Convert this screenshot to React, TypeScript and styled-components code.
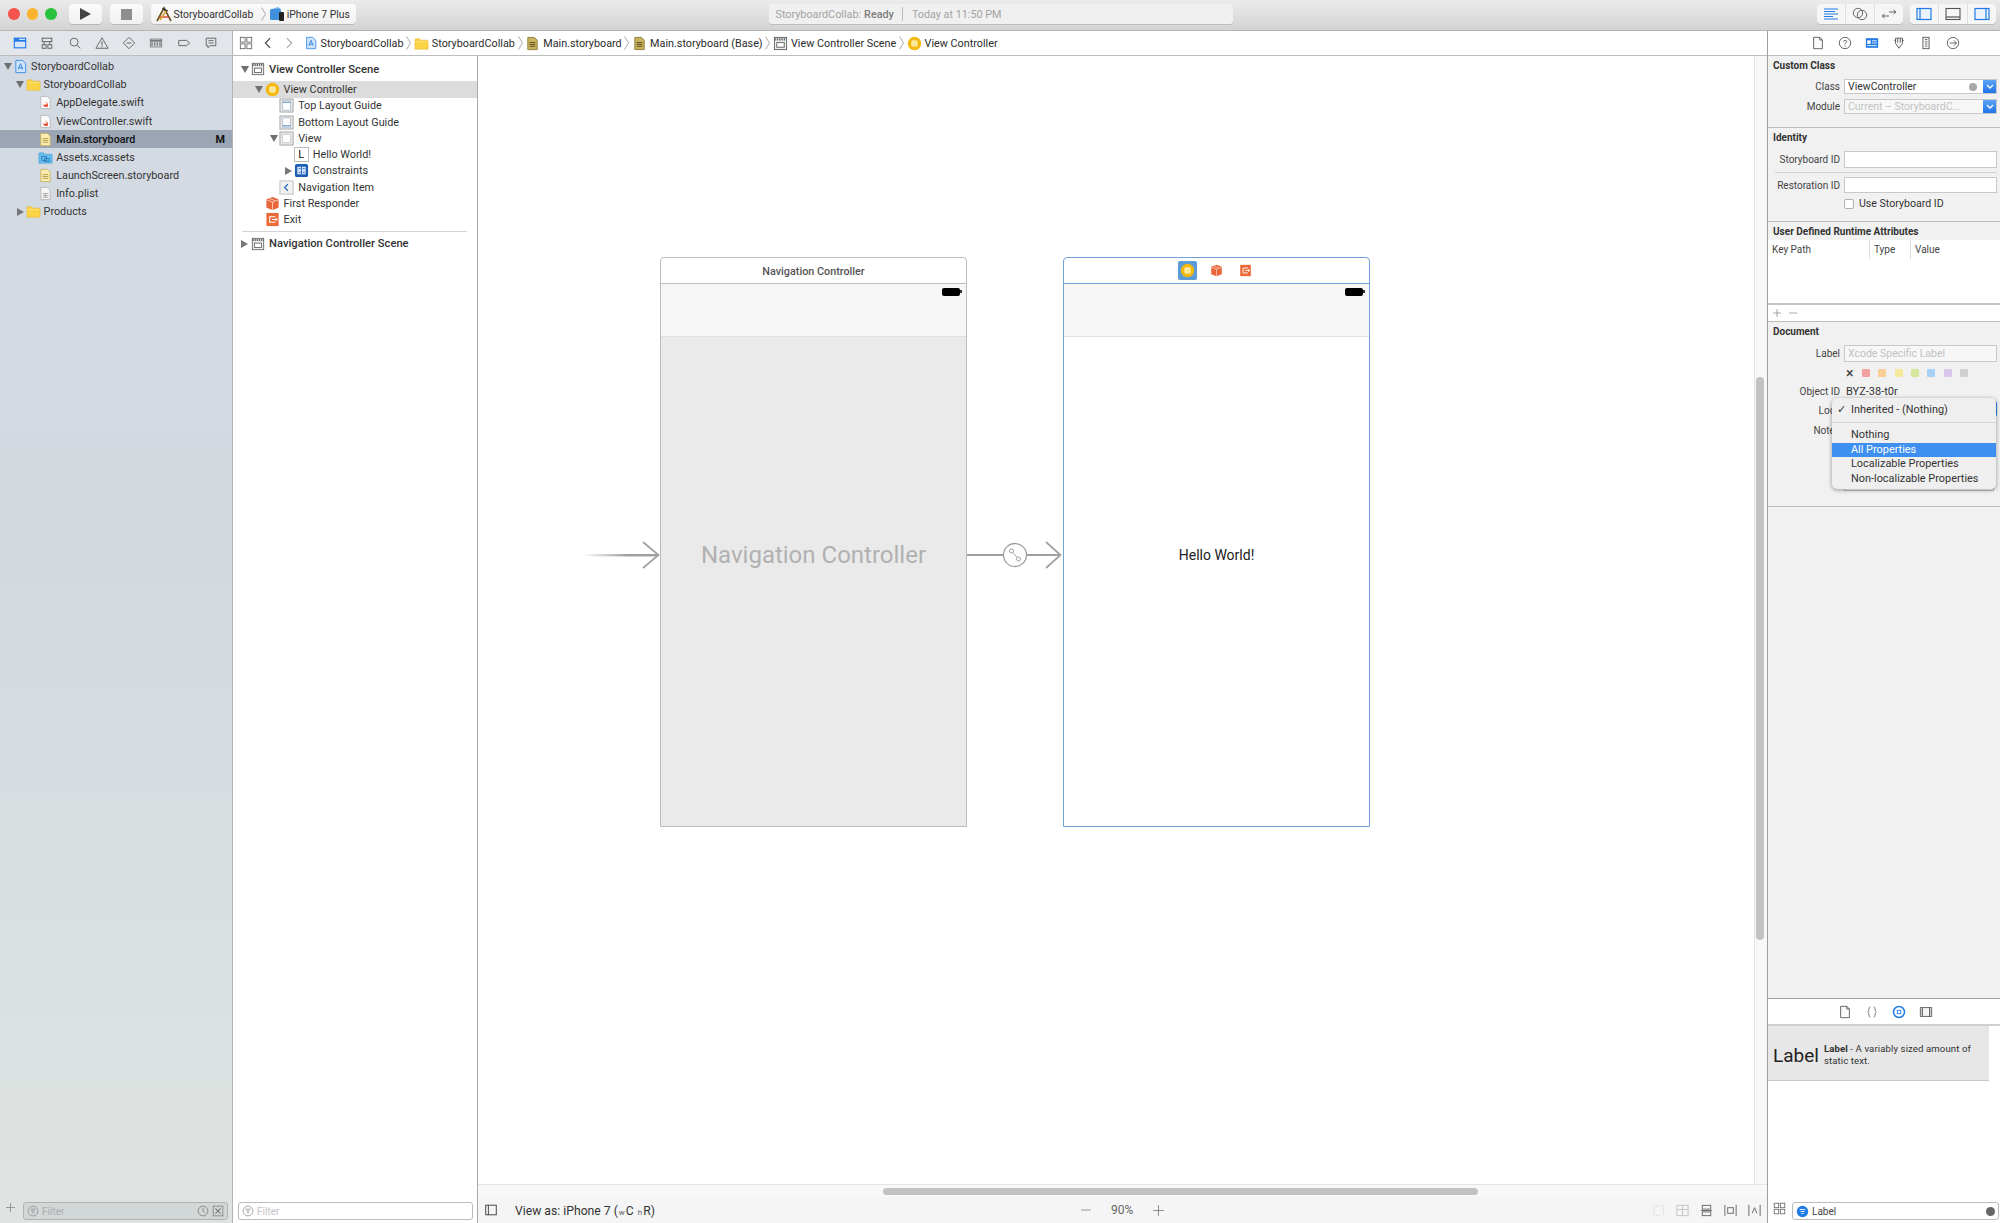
import React from "react";
import styled, { createGlobalStyle } from "styled-components";

const GlobalStyle = createGlobalStyle`
  html, body {
    margin: 0;
    padding: 0;
    background: #fff;
    font-family: Roboto, "Liberation Sans", sans-serif;
    font-size: 11px;
    color: #2b2b2b;
  }
  * { box-sizing: border-box; }
  svg { display: block; flex: none; }
`;

const Window = styled.div`
  width: 2000px;
  height: 1223px;
  display: flex;
  flex-direction: column;
  overflow: hidden;
`;

/* ---------- icons ---------- */

const glyphs: Record<string, React.ReactNode> = {
  hammer: (
    <>
      <path d="M1 15 8 2l7 13" fill="none" stroke="#6d4f1c" strokeWidth="1.6" />
      <path d="M3.5 11h9" stroke="#d8402e" strokeWidth="1.4" />
      <path d="M7 1.5l5 3-1 1.5-5-3z" fill="#333" />
      <path d="M10 5 4 14" stroke="#e0a030" strokeWidth="1.6" />
    </>
  ),
  phone: (
    <>
      <rect x="1" y="3" width="11" height="11" rx="1.5" fill="#3f8fdc" />
      <path d="M3 3l6-2 3 2z" fill="#6db2ec" />
      <rect x="10" y="6" width="5" height="9" rx="1" fill="#222" />
    </>
  ),
  navFolder: (
    <>
      <rect x="1.5" y="2.5" width="13" height="11" fill="#d8e8fb" stroke="#1f7ae6" strokeWidth="1.3" />
      <path d="M1.5 5.5h13" stroke="#1f7ae6" strokeWidth="2" />
      <path d="M2 2.5h5v2H2z" fill="#1f7ae6" />
    </>
  ),
  navTree: (
    <g fill="none" stroke="#555" strokeWidth="1">
      <rect x="2.5" y="2.5" width="11" height="4" />
      <rect x="2.5" y="10" width="4.5" height="4" />
      <rect x="9" y="10" width="4.5" height="4" />
      <path d="M4.7 6.5V10M11.2 6.5V10" />
    </g>
  ),
  navSearch: (
    <g fill="none" stroke="#666" strokeWidth="1.1">
      <circle cx="7" cy="7" r="4.5" />
      <path d="M10.3 10.3 14 14" />
    </g>
  ),
  navWarn: (
    <>
      <path d="M8 2 15 14H1z" fill="none" stroke="#666" strokeWidth="1.1" />
      <path d="M8 6v4.5M8 11.5v1.2" stroke="#666" strokeWidth="1.2" />
    </>
  ),
  navTest: (
    <>
      <path d="M8 1.5 14.5 8 8 14.5 1.5 8z" fill="none" stroke="#666" strokeWidth="1.1" />
      <path d="M5.5 8h5" stroke="#666" strokeWidth="1.2" />
    </>
  ),
  navDebug: (
    <>
      <rect x="1.5" y="3.5" width="13" height="9" fill="none" stroke="#777" />
      <path d="M1.5 5.5h13" stroke="#777" strokeWidth="2" />
      <path d="M3.5 7v4M6.5 7v4M9.5 7v4M12.5 7v4" stroke="#777" strokeWidth="1.6" />
    </>
  ),
  navBreak: <path d="M2 5h9l3.5 3L11 11H2z" fill="none" stroke="#666" strokeWidth="1.1" />,
  navReport: (
    <>
      <path d="M2.5 2.5h11v8.5H7l-2.5 2.5V11h-2z" fill="none" stroke="#666" strokeWidth="1.1" />
      <path d="M5 5.3h6M5 8h6" stroke="#666" />
    </>
  ),
  grid: (
    <g fill="none" stroke="#666">
      <rect x="1.5" y="1.5" width="5.5" height="5.5" />
      <rect x="9" y="1.5" width="5.5" height="5.5" />
      <rect x="1.5" y="9" width="5.5" height="5.5" />
      <rect x="9" y="9" width="5.5" height="5.5" />
    </g>
  ),
  back: <path d="M10.5 2.5 5 8l5.5 5.5" fill="none" stroke="#444" strokeWidth="1.3" />,
  forward: <path d="M5.5 2.5 11 8l-5.5 5.5" fill="none" stroke="#aaa" strokeWidth="1.3" />,
  project: (
    <>
      <path d="M3 1.5h7L13.5 5v9.5H3z" fill="#cfe4fa" stroke="#3a8ee6" />
      <path d="M5.5 11 8 5l2.5 6M6 9.5h4" fill="none" stroke="#2b7fdc" />
    </>
  ),
  folder: (
    <>
      <path d="M1 4a1 1 0 0 1 1-1h4l1.5 1.5H14a1 1 0 0 1 1 1V14H1z" fill="#fbd446" stroke="#e5b52c" strokeWidth=".6" />
      <path d="M1 6h14" stroke="#fde68a" strokeWidth=".7" />
    </>
  ),
  swift: (
    <>
      <path d="M3 1.5h7L13 4.5v10H3z" fill="#fbfbfb" stroke="#b9b9b9" />
      <path d="M5 10c2 1 4 .5 4.5-1L7 7l3 1.5c.7 1.3.6 3 .4 4-1.5.4-3.8.4-5.4-2.5z" fill="#e8442e" />
    </>
  ),
  storyboard: (
    <>
      <path d="M3 1.5h7L13 4.5v10H3z" fill="#fbeeb4" stroke="#cdb565" />
      <path d="M5 7h6M5 9h6M5 11h6" stroke="#b69a45" />
    </>
  ),
  storyboardDark: (
    <>
      <path d="M3 1.5h7L13 4.5v10H3z" fill="#c9b35f" stroke="#8f7c38" />
      <path d="M5 7h6M5 9h6M5 11h6" stroke="#5a4d20" />
    </>
  ),
  assets: (
    <>
      <path d="M1 4a1 1 0 0 1 1-1h4l1.5 1.5H14a1 1 0 0 1 1 1V14H1z" fill="#67bdee" stroke="#3f9ad6" strokeWidth=".6" />
      <rect x="4" y="7" width="5" height="4" fill="none" stroke="#1f74b5" strokeWidth=".8" />
      <rect x="7" y="9" width="5" height="3" fill="none" stroke="#1f74b5" strokeWidth=".8" />
    </>
  ),
  plist: (
    <>
      <path d="M3 1.5h7L13 4.5v10H3z" fill="#f5f5f5" stroke="#b9b9b9" />
      <path d="M5 8h6M5 10h6M5 12h6M8 8v4" stroke="#aaa" />
    </>
  ),
  scene: (
    <>
      <rect x="1.5" y="1.5" width="13" height="13" fill="#eee" stroke="#666" />
      <path d="M1.5 3.5h13" stroke="#666" strokeWidth="2.4" strokeDasharray="1.5 1" />
      <rect x="4" y="7" width="8" height="5" fill="#fff" stroke="#666" />
    </>
  ),
  vc: (
    <>
      <circle cx="8" cy="8" r="7.2" fill="#f5b80f" />
      <rect x="5" y="5" width="6" height="6" rx="1" fill="#fde89a" stroke="#fff3c4" strokeWidth=".6" />
    </>
  ),
  topGuide: (
    <>
      <rect x="1" y="1" width="14" height="14" fill="#e6e6e6" stroke="#a6a6a6" />
      <rect x="4" y="3" width="8" height="10" fill="#fff" stroke="#9bb0c8" strokeWidth=".7" />
      <path d="M4 4.5h8" stroke="#4a7fb8" />
    </>
  ),
  bottomGuide: (
    <>
      <rect x="1" y="1" width="14" height="14" fill="#e6e6e6" stroke="#a6a6a6" />
      <rect x="4" y="3" width="8" height="10" fill="#fff" stroke="#9bb0c8" strokeWidth=".7" />
      <path d="M4 11.5h8" stroke="#4a7fb8" />
    </>
  ),
  view: (
    <>
      <rect x="1" y="1" width="14" height="14" fill="#e6e6e6" stroke="#a6a6a6" />
      <rect x="4" y="4" width="8" height="8" fill="#fff" stroke="#bbb" strokeWidth=".6" />
    </>
  ),
  constraints: (
    <>
      <rect x="1" y="1" width="14" height="14" rx="2" fill="#1d5fb4" />
      <rect x="3.5" y="4" width="9" height="8" fill="#d9e8fa" />
      <path d="M8 4v8M5 6h2M5 10h2M9.5 6h2M9.5 10h2" stroke="#1d5fb4" />
    </>
  ),
  navItem: (
    <>
      <rect x="1" y="1" width="14" height="14" fill="#f2f2f2" stroke="#bcbcbc" />
      <path d="M9.5 4.5 6 8l3.5 3.5" fill="none" stroke="#2968c4" strokeWidth="1.3" />
    </>
  ),
  cube: (
    <>
      <path d="M8 1 14.5 3.5v9L8 15l-6.5-2.5v-9z" fill="#e8673a" />
      <path d="M1.5 4 8 6.5 14.5 4M8 6.5V15M4.5 2.5l6.5 2.5" fill="none" stroke="#fbe0d2" strokeWidth=".8" />
    </>
  ),
  exit: (
    <>
      <rect x="1.5" y="1" width="13" height="14" fill="#ea6a36" />
      <path d="M11 5H5v6h6" fill="none" stroke="#fff" strokeWidth="1.1" />
      <path d="M7.5 8H13M11 6.3 13 8l-2 1.7" fill="none" stroke="#fff" />
    </>
  ),
  editorStd: <path d="M1 3h14M1 5.5h11M1 8h14M1 10.5h9M1 13h14" stroke="#1f7ae6" strokeWidth="1.1" />,
  editorAssist: (
    <g fill="none" stroke="#666">
      <circle cx="6" cy="7" r="4.7" />
      <circle cx="10" cy="9" r="4.7" />
    </g>
  ),
  editorVersion: <path d="M1 10h7M1 10l2.5-2M1 10l2.5 2M8 6h7M15 6l-2.5-2M15 6l-2.5 2" fill="none" stroke="#666" />,
  paneLeft: (
    <>
      <rect x="1" y="2.5" width="14" height="11" fill="#eaf2fd" stroke="#1f7ae6" strokeWidth="1.2" />
      <path d="M4 2.5v11" stroke="#1f7ae6" strokeWidth="1.2" />
    </>
  ),
  paneBottom: (
    <>
      <rect x="1" y="2.5" width="14" height="11" fill="none" stroke="#555" strokeWidth="1.1" />
      <path d="M1 11h14" stroke="#555" strokeWidth="1.2" />
    </>
  ),
  paneRight: (
    <>
      <rect x="1" y="2.5" width="14" height="11" fill="#eaf2fd" stroke="#1f7ae6" strokeWidth="1.2" />
      <path d="M12 2.5v11" stroke="#1f7ae6" strokeWidth="1.2" />
    </>
  ),
  file: <path d="M3 1.5h7L13 4.5v10H3zM10 1.5v3h3" fill="#fbfbfb" stroke="#555" />,
  help: (
    <>
      <circle cx="8" cy="8" r="6.5" fill="none" stroke="#555" />
      <path d="M6.2 6.5C6.2 4.5 10 4.5 10 6.5c0 1.3-2 1.3-2 3M8 10.8V12" fill="none" stroke="#555" />
    </>
  ),
  identity: (
    <>
      <rect x="1" y="2.5" width="14" height="11" fill="#1f7ae6" />
      <rect x="2.5" y="5" width="4" height="4" fill="#fff" />
      <path d="M8 5.5h5.5M8 8h5.5M2.5 11h11" stroke="#fff" />
    </>
  ),
  attrs: <path d="M4 2.5h8v6l-4 5.5-4-5.5zM4 5H2.5M12 5h1.5M6.5 2.5v5M9.5 2.5v5" fill="#f3f3f3" stroke="#555" />,
  ruler: (
    <>
      <rect x="4.5" y="1.5" width="7" height="13" fill="#f3f3f3" stroke="#555" />
      <path d="M7 4h2.5M7 6.5h2.5M7 9h2.5M7 11.5h2.5" stroke="#555" />
    </>
  ),
  connect: (
    <>
      <circle cx="8" cy="8" r="6.5" fill="none" stroke="#555" />
      <path d="M4 8h8M9 5l3 3-3 3" fill="none" stroke="#555" />
    </>
  ),
  braces: (
    <path d="M6 2C3.5 2 5.5 7.5 3 8c2.5.5.5 6 3 6M10 2c2.5 0 .5 5.5 3 6-2.5.5-.5 6-3 6" fill="none" stroke="#666" />
  ),
  target: (
    <>
      <circle cx="8" cy="8" r="6.3" fill="none" stroke="#1f7ae6" strokeWidth="1.7" />
      <rect x="6" y="6" width="4" height="4" fill="none" stroke="#1f7ae6" />
    </>
  ),
  film: (
    <>
      <rect x="1.5" y="3" width="13" height="10" fill="#f5f5f5" stroke="#555" />
      <path d="M4 3v10M12 3v10" stroke="#555" />
      <path d="M1.5 5.5H4M1.5 8H4M1.5 10.5H4M12 5.5h2.5M12 8h2.5M12 10.5h2.5" stroke="#888" />
    </>
  ),
  filterBlue: (
    <>
      <circle cx="8" cy="8" r="7" fill="#1f7ae6" />
      <path d="M4.5 5.5h7M5.5 8h5M6.7 10.5h2.6" stroke="#fff" strokeWidth="1.1" />
    </>
  ),
  filter: (
    <>
      <circle cx="8" cy="8" r="6.5" fill="none" stroke="#8b8b8b" />
      <path d="M4.5 5.5h7M5.5 8h5M6.7 10.5h2.6" stroke="#8b8b8b" />
    </>
  ),
  clock: (
    <>
      <circle cx="8" cy="8" r="6.5" fill="none" stroke="#777" />
      <path d="M8 4v4.5l3 1.5" fill="none" stroke="#777" />
    </>
  ),
  scmBox: (
    <>
      <rect x="1.5" y="1.5" width="13" height="13" fill="none" stroke="#777" />
      <path d="M4.5 4.5l7 7M11.5 4.5l-7 7" stroke="#777" strokeWidth="1.4" />
    </>
  ),
  plus: <path d="M8 1.5v13M1.5 8h13" stroke="#777" />,
  minus: <path d="M1.5 8h13" stroke="#777" />,
  sideToggle: (
    <>
      <rect x="2" y="2.5" width="12" height="11" fill="none" stroke="#333" />
      <path d="M5 2.5v11" stroke="#333" />
    </>
  ),
  stackOff: (
    <g fill="none" stroke="#d6d6d6" strokeDasharray="2 1">
      <path d="M3 2v12M13 2v12M5 3h6M5 13h6" />
    </g>
  ),
  embedOff: (
    <g fill="none" stroke="#c4c4c4">
      <rect x="2" y="2.5" width="12" height="11" />
      <path d="M2 7h12M8 2.5v11" />
    </g>
  ),
  align: (
    <g fill="none" stroke="#666">
      <path d="M2 8h12" />
      <rect x="3.5" y="2.5" width="9" height="4" />
      <rect x="3.5" y="9.5" width="9" height="4" />
    </g>
  ),
  pin: (
    <g fill="none" stroke="#666">
      <path d="M2 2v12M14 2v12" />
      <rect x="5" y="5" width="6" height="6" />
    </g>
  ),
  resolve: (
    <g fill="none" stroke="#666">
      <path d="M2 2v12M14 2v12" />
      <path d="M5.5 11 8 5l2.5 6" />
    </g>
  ),
};

const Icon = ({ name, size = 16 }: { name: string; size?: number }) => (
  <svg width={size} height={size} viewBox="0 0 16 16">
    {glyphs[name]}
  </svg>
);

/* ---------- toolbar ---------- */

const TitleBar = styled.header`
  height: 31px;
  flex: none;
  display: flex;
  align-items: flex-start;
  padding: 4px 0 0 8px;
  background: linear-gradient(#ebebeb, #d3d3d3);
  border-bottom: 1px solid #b4b4b4;
`;
const Lights = styled.div`
  display: flex;
  gap: 7px;
  margin: 4px 12px 0 0;
`;
const Light = styled.span<{ $c: string }>`
  width: 11.5px;
  height: 11.5px;
  border-radius: 50%;
  background: ${(p) => p.$c};
`;
const ToolButton = styled.button`
  width: 33px;
  height: 20px;
  margin: 0 8px 0 0;
  padding: 0;
  border: 0;
  border-radius: 4px;
  background: linear-gradient(#fbfbfb, #f1f1f1);
  box-shadow: 0 1px 0 #b9b9b9;
  display: flex;
  align-items: center;
  justify-content: center;
`;
const PlayGlyph = styled.span`
  width: 0;
  height: 0;
  border-left: 11px solid #444;
  border-top: 6.5px solid transparent;
  border-bottom: 6.5px solid transparent;
`;
const StopGlyph = styled.span`
  width: 11px;
  height: 11px;
  background: #8e8e8e;
`;
const Scheme = styled.div`
  width: 205px;
  height: 20px;
  flex: none;
  display: flex;
  align-items: center;
  padding-left: 5px;
  border-radius: 4px;
  background: linear-gradient(#fbfbfb, #f1f1f1);
  box-shadow: 0 1px 0 #b9b9b9;
  font-size: 10.4px;
  color: #333;
  white-space: nowrap;
`;
const SchemeName = styled.span`
  margin: 0 5px 0 2px;
`;
const Status = styled.div`
  width: 464px;
  height: 20px;
  flex: none;
  margin-left: 413px;
  padding-left: 7px;
  display: flex;
  align-items: center;
  border-radius: 3px;
  background: #f0f0f0;
  box-shadow: 0 1px 0 #bdbdbd;
  font-size: 10.8px;
  color: #a3a3a3;
`;
const StatusStrong = styled.b`
  font-weight: 500;
  color: #7d7d7d;
  margin-left: 3px;
`;
const StatusDivider = styled.span`
  width: 1px;
  height: 14px;
  margin: 0 9px 0 8px;
  background: #bdbdbd;
`;
const ToolGroup = styled.div<{ $left: number }>`
  display: flex;
  height: 20px;
  margin-left: ${(p) => p.$left}px;
  border-radius: 4px;
  background: #f6f6f6;
  box-shadow: 0 1px 0 #bdbdbd;
`;
const ToolSegment = styled.span`
  width: 28.7px;
  display: flex;
  align-items: center;
  justify-content: center;
  border-left: 1px solid #dedede;
  &:first-child {
    border-left: 0;
  }
`;

/* ---------- columns ---------- */

const Body = styled.div`
  flex: 1;
  min-height: 0;
  display: flex;
`;
const Navigator = styled.aside`
  width: 233px;
  flex: none;
  display: flex;
  flex-direction: column;
  border-right: 1px solid #b3b3b3;
  background: linear-gradient(#d4dae3 0, #d3d9df 45%, #dfe4e2 100%);
`;
const NavTabs = styled.div`
  height: 25px;
  flex: none;
  display: flex;
  align-items: center;
  padding-left: 8px;
  background: #e2e5ea;
  border-bottom: 1px solid #bcbcbc;
`;
const NavTab = styled.span`
  width: 27.3px;
  display: flex;
  justify-content: flex-start;
  padding-left: 5px;
`;
const Tree = styled.div`
  flex: 1;
  padding-top: 1.6px;
`;
const FileRow = styled.div<{ $level: number; $selected?: boolean }>`
  height: 18.15px;
  display: flex;
  align-items: center;
  padding-left: ${(p) => 2 + p.$level * 12.6}px;
  padding-right: 7px;
  font-size: 10.8px;
  font-weight: ${(p) => (p.$selected ? 500 : 400)};
  color: ${(p) => (p.$selected ? "#111" : "#333")};
  background: ${(p) => (p.$selected ? "#9ba5b4" : "transparent")};
`;
const Disclosure = styled.span<{ $state?: "open" | "closed" }>`
  width: 11px;
  flex: none;
  display: flex;
  justify-content: center;
  &::before {
    content: "";
    display: ${(p) => (p.$state ? "block" : "none")};
    border-style: solid;
    border-color: transparent;
    ${(p) =>
      p.$state === "open"
        ? "border-width: 7px 4.5px 0; border-top-color: #6f6f6f;"
        : "border-width: 4.5px 0 4.5px 7px; border-left-color: #777;"}
  }
`;
const RowIcon = styled.span`
  width: 15px;
  flex: none;
  display: flex;
  justify-content: center;
  margin-right: 3px;
`;
const RowName = styled.span`
  flex: 1;
  white-space: nowrap;
`;
const Badge = styled.b`
  font-weight: 700;
`;
const FilterBar = styled.div`
  height: 26px;
  flex: none;
  display: flex;
  align-items: flex-start;
  gap: 7px;
  padding: 5px 4px 0 5px;
`;
const FilterField = styled.div<{ $dim?: boolean; $ink?: string }>`
  flex: 1;
  height: 18px;
  display: flex;
  align-items: center;
  gap: 3px;
  padding: 0 3px;
  border: 1px solid ${(p) => (p.$dim ? "#aeb3b3" : "#bcbcbc")};
  border-radius: 3px;
  background: ${(p) => (p.$dim ? "#d2d7d7" : "#fff")};
  font-size: 10px;
  color: ${(p) => p.$ink || "#c2c2c2"};
`;
const FilterText = styled.span`
  flex: 1;
  padding-top: 1px;
`;

const Editor = styled.main`
  flex: 1;
  min-width: 0;
  display: flex;
  flex-direction: column;
`;
const JumpBar = styled.nav`
  height: 25px;
  flex: none;
  display: flex;
  align-items: center;
  padding-left: 6px;
  border-bottom: 1px solid #bcbcbc;
  font-size: 10.8px;
  color: #2b2b2b;
`;
const JumpNav = styled.span`
  width: 21.5px;
  display: flex;
`;
const Crumb = styled.span`
  display: flex;
  align-items: center;
  gap: 3px;
  white-space: nowrap;
`;
const CrumbSep = styled.svg`
  margin: 0 2.7px;
`;
const EditorBody = styled.div`
  flex: 1;
  min-height: 0;
  display: flex;
`;
const Outline = styled.section`
  width: 245px;
  flex: none;
  display: flex;
  flex-direction: column;
  border-right: 1px solid #a9a9a9;
  background: #fff;
`;
const OutlineTree = styled.div`
  flex: 1;
  padding-top: 5px;
`;
const OutlineRow = styled.div<{ $level: number; $selected?: boolean; $scene?: boolean }>`
  height: 16.3px;
  display: flex;
  align-items: center;
  padding-left: ${(p) => 6 + p.$level * 14.6}px;
  margin-bottom: ${(p) => (p.$scene ? "4px" : 0)};
  font-size: ${(p) => (p.$scene ? "11.2px" : "10.8px")};
  font-weight: ${(p) => (p.$scene ? 500 : 400)};
  color: #333;
  background: ${(p) => (p.$selected ? "#dcdcdc" : "transparent")};
  & > span:nth-child(2) {
    margin-right: 4px;
  }
`;
const OutlineRule = styled.div`
  height: 1px;
  margin: 3.5px 10px 3px 9px;
  background: #d4d4d4;
`;

/* ---------- canvas ---------- */

const Canvas = styled.section`
  flex: 1;
  min-width: 0;
  display: flex;
  flex-direction: column;
`;
const CanvasMain = styled.div`
  flex: 1;
  min-height: 0;
  display: flex;
`;
const Stage = styled.div`
  flex: 1;
  display: flex;
  align-items: flex-start;
  padding: 201px 0 0 104px;
  background: #fff;
`;
const EntryArrow = styled.svg`
  margin-top: 282px;
`;
const Scene = styled.div<{ $selected?: boolean }>`
  width: 307px;
  height: 570px;
  flex: none;
  display: flex;
  flex-direction: column;
  border: 1px solid ${(p) => (p.$selected ? "#72a2d8" : "#bcbcbc")};
  border-radius: 4px 4px 0 0;
`;
const SceneHeader = styled.div<{ $selected?: boolean }>`
  height: 25.5px;
  flex: none;
  display: flex;
  align-items: center;
  justify-content: center;
  padding-top: ${(p) => (p.$selected ? 0 : 2)}px;
  border-bottom: 1px solid ${(p) => (p.$selected ? "#72a2d8" : "#bcbcbc")};
  font-size: 10.8px;
  font-weight: 500;
  color: #555;
`;
const DockItem = styled.span<{ $selected?: boolean }>`
  width: 19px;
  height: 19px;
  margin: 0 5px;
  display: flex;
  align-items: center;
  justify-content: center;
  border-radius: 2px;
  background: ${(p) => (p.$selected ? "#5a9bd8" : "transparent")};
`;
const NavBar = styled.div`
  height: 53px;
  flex: none;
  display: flex;
  justify-content: flex-end;
  padding: 4px 5px 0 0;
  background: #f6f6f6;
  border-bottom: 1px solid #e0e0e0;
`;
const Battery = styled.span`
  width: 18px;
  height: 8px;
  margin-right: 1px;
  border-radius: 2px;
  background: #000;
  position: relative;
  &::after {
    content: "";
    position: absolute;
    right: -2px;
    top: 2.5px;
    width: 2px;
    height: 3px;
    background: #333;
  }
`;
const SceneBody = styled.div<{ $placeholder?: boolean }>`
  flex: 1;
  padding-bottom: 53px;
  display: flex;
  align-items: center;
  justify-content: center;
  background: ${(p) => (p.$placeholder ? "#eaeaea" : "#fff")};
  color: ${(p) => (p.$placeholder ? "#b1b1b1" : "#222")};
  font-size: ${(p) => (p.$placeholder ? "24px" : "14px")};
`;
const SegueArrow = styled.svg`
  margin-top: 282px;
`;
const VTrack = styled.div`
  width: 13px;
  flex: none;
  padding: 321px 0 0 1px;
  background: #f8f8f8;
  border-left: 1px solid #e4e4e4;
`;
const VThumb = styled.div`
  width: 8px;
  height: 563px;
  border-radius: 4px;
  background: #c2c2c2;
`;
const HTrack = styled.div`
  height: 13px;
  flex: none;
  padding: 3px 0 0 405px;
  background: #f8f8f8;
  border-top: 1px solid #e4e4e4;
`;
const HThumb = styled.div`
  width: 595px;
  height: 7px;
  border-radius: 4px;
  background: #c2c2c2;
`;
const CanvasBar = styled.div`
  height: 26px;
  flex: none;
  display: flex;
  align-items: center;
  padding-left: 6px;
  background: #f5f5f5;
  font-size: 12.2px;
  color: #333;
`;
const ViewAs = styled.span`
  margin-left: 17px;
  padding-top: 1px;
`;
const SizeClass = styled.small`
  font-size: 8px;
  color: #666;
  margin: 0 1px;
`;
const Zoom = styled.div`
  margin-left: 425px;
  display: flex;
  align-items: center;
  color: #666;
  font-size: 12px;
  gap: 19px;
`;
const BarIcons = styled.div`
  margin-left: auto;
  padding-right: 5px;
  display: flex;
  gap: 9px;
`;

/* ---------- inspector ---------- */

const Inspector = styled.aside`
  width: 233px;
  flex: none;
  display: flex;
  flex-direction: column;
  border-left: 1px solid #9f9f9f;
  background: #fff;
`;
const InspectorTabs = styled.div`
  height: 25px;
  flex: none;
  display: flex;
  align-items: center;
  padding-left: 36px;
  border-bottom: 1px solid #bcbcbc;
  background: #fff;
`;
const InspectorTab = styled.span`
  width: 27px;
  display: flex;
  justify-content: center;
`;
const Panels = styled.div`
  flex: 1;
  min-height: 0;
  display: flex;
  flex-direction: column;
  background: #f1f1f1;
`;
const Panel = styled.section<{ $h: number; $top: number }>`
  height: ${(p) => p.$h}px;
  flex: none;
  padding-top: ${(p) => p.$top}px;
  border-bottom: 1px solid #bcbcbc;
  position: relative;
`;
const PanelTitle = styled.h4`
  margin: 0 0 6px;
  padding-left: 5px;
  height: 14px;
  line-height: 14px;
  font-size: 10px;
  font-weight: 700;
  color: #333;
`;
const FormRow = styled.div<{ $h: number; $gap?: number }>`
  height: ${(p) => p.$h}px;
  margin-bottom: ${(p) => p.$gap || 0}px;
  display: grid;
  grid-template-columns: 72px 1fr;
  column-gap: 4px;
  align-items: center;
  padding-right: 3px;
`;
const FormLabel = styled.label`
  text-align: right;
  font-size: 10px;
  color: #444;
  white-space: nowrap;
`;
const Field = styled.div<{ $disabled?: boolean }>`
  height: 100%;
  display: flex;
  align-items: center;
  padding-left: 3px;
  border: 1px solid #c8c8c8;
  background: ${(p) => (p.$disabled ? "#f7f7f7" : "#fff")};
  font-size: 10.5px;
  color: ${(p) => (p.$disabled ? "#c2c2c2" : "#333")};
  overflow: hidden;
`;
const FieldText = styled.span`
  flex: 1;
  white-space: nowrap;
`;
const Stepper = styled.span`
  width: 14px;
  align-self: stretch;
  margin: -1px -1px -1px 0;
  flex: none;
  display: flex;
  align-items: center;
  justify-content: center;
  border-radius: 0 3px 3px 0;
  background: linear-gradient(#5fa6f6, #1b70e8);
`;
const GoDot = styled.span`
  width: 8px;
  height: 8px;
  margin-right: 6px;
  border-radius: 50%;
  background: #a8a8a8;
`;
const Rule = styled.div`
  height: 1px;
  margin: 4px 3px 4px 7px;
  background: #d2d2d2;
`;
const CheckLine = styled.div`
  margin: 4px 0 0 76px;
  display: flex;
  align-items: center;
  gap: 5px;
  font-size: 10.6px;
  color: #333;
`;
const CheckBox = styled.span`
  width: 10px;
  height: 10px;
  border: 1px solid #b0b0b0;
  border-radius: 2px;
  background: #fff;
`;
const AttrTable = styled.div`
  background: #fff;
  height: 65px;
  border-bottom: 2px solid #c4c4c4;
  margin-top: -5px;
`;
const AttrHead = styled.div`
  height: 19px;
  display: grid;
  grid-template-columns: 101px 41px 1fr;
  align-items: center;
  font-size: 10px;
  color: #444;
`;
const AttrCol = styled.span`
  padding-left: 4px;
  height: 100%;
  line-height: 19px;
  & + & {
    border-left: 1px solid #dedede;
  }
`;
const AttrActions = styled.div`
  height: 16px;
  display: flex;
  align-items: center;
  gap: 6px;
  padding-left: 4px;
  background: #fff;
`;
const Swatches = styled.div`
  height: 11px;
  margin: 5px 0 6px 78px;
  display: flex;
  align-items: center;
  gap: 8.4px;
  font-size: 14px;
  font-weight: 500;
  color: #444;
`;
const Swatch = styled.span<{ $c: string }>`
  width: 8px;
  height: 8px;
  border-radius: 1px;
  background: ${(p) => p.$c};
`;
const PlainValue = styled.span`
  padding-left: 2px;
  font-size: 11px;
  color: #333;
`;
const Menu = styled.div`
  position: absolute;
  left: 64px;
  top: 76px;
  width: 164px;
  height: 91px;
  padding-top: 5px;
  border-radius: 5px;
  background: #efefef;
  box-shadow: 0 1px 4px rgba(0, 0, 0, 0.4);
  font-size: 10.9px;
  color: #333;
`;
const MenuItem = styled.div<{ $active?: boolean }>`
  height: 14.4px;
  line-height: 14.4px;
  padding-left: 19px;
  background: ${(p) => (p.$active ? "#3d8ff0" : "transparent")};
  color: ${(p) => (p.$active ? "#fff" : "#333")};
  position: relative;
`;
const Check = styled.span`
  position: absolute;
  left: 5px;
`;
const MenuRule = styled.div`
  height: 1px;
  margin: 5px 0 5px;
  background: #d4d4d4;
`;
const NotesUnder = styled.div`
  position: absolute;
  left: 76px;
  top: 100px;
  width: 150px;
  height: 69px;
  border: 1px solid #c4c4c4;
  background: #fff;
`;
const LockUnder = styled.div`
  position: absolute;
  right: 3px;
  top: 79px;
  width: 60px;
  height: 16px;
  border-radius: 3px;
  background: #2f7fe8;
`;
const LibraryTabs = styled.div`
  height: 28px;
  flex: none;
  display: flex;
  align-items: center;
  padding-left: 63px;
  border-top: 1px solid #9f9f9f;
  border-bottom: 2px solid #cfcfcf;
  background: #fff;
`;
const LibraryList = styled.div`
  height: 171px;
  flex: none;
  background: #fff;
`;
const LibraryItem = styled.div`
  width: 221px;
  height: 55px;
  display: flex;
  align-items: center;
  padding: 0 6px 0 5px;
  background: #e7e7e7;
  border-bottom: 1px solid #c8c8c8;
`;
const LibraryName = styled.span`
  font-size: 19px;
  color: #222;
  margin-right: 5px;
  padding-top: 4px;
`;
const LibraryText = styled.div`
  padding-top: 3px;
  font-size: 9.6px;
  line-height: 12px;
  color: #333;
  letter-spacing: 0.1px;
`;
const LibraryLine = styled.div`
  white-space: nowrap;
`;
const InspectorFilter = styled.div`
  height: 26px;
  flex: none;
  display: flex;
  align-items: flex-start;
  gap: 6px;
  padding: 5px 1px 0 5px;
  background: #fff;
`;
const ClearDot = styled.span`
  width: 9px;
  height: 9px;
  border-radius: 50%;
  background: #666;
`;

const Chevron = () => (
  <CrumbSep width="5" height="16" viewBox="0 0 5 16">
    <path d="M.5 1.5 4.5 8 .5 14.5" fill="none" stroke="#aaa" />
  </CrumbSep>
);

const ArrowDown = () => (
  <svg width="8" height="6" viewBox="0 0 8 6">
    <path d="M1 1l3 3 3-3" fill="none" stroke="#fff" strokeWidth="1.4" />
  </svg>
);

const files = [
  { level: 0, state: "open", icon: "project", name: "StoryboardCollab" },
  { level: 1, state: "open", icon: "folder", name: "StoryboardCollab" },
  { level: 2, icon: "swift", name: "AppDelegate.swift" },
  { level: 2, icon: "swift", name: "ViewController.swift" },
  { level: 2, icon: "storyboard", name: "Main.storyboard", selected: true, badge: "M" },
  { level: 2, icon: "assets", name: "Assets.xcassets" },
  { level: 2, icon: "storyboard", name: "LaunchScreen.storyboard" },
  { level: 2, icon: "plist", name: "Info.plist" },
  { level: 1, state: "closed", icon: "folder", name: "Products" },
] as const;

const outline = [
  { level: 1, state: "open", icon: "vc", name: "View Controller", selected: true },
  { level: 2, icon: "topGuide", name: "Top Layout Guide" },
  { level: 2, icon: "bottomGuide", name: "Bottom Layout Guide" },
  { level: 2, state: "open", icon: "view", name: "View" },
  { level: 3, icon: "label", name: "Hello World!" },
  { level: 3, state: "closed", icon: "constraints", name: "Constraints" },
  { level: 2, icon: "navItem", name: "Navigation Item" },
  { level: 1, icon: "cube", name: "First Responder" },
  { level: 1, icon: "exit", name: "Exit" },
] as const;

const crumbs = [
  { icon: "project", text: "StoryboardCollab" },
  { icon: "folder", text: "StoryboardCollab" },
  { icon: "storyboardDark", text: "Main.storyboard" },
  { icon: "storyboardDark", text: "Main.storyboard (Base)" },
  { icon: "scene", text: "View Controller Scene" },
  { icon: "vc", text: "View Controller" },
];

const swatchColors = ["#f2a0a0", "#f8cf96", "#f6ea9a", "#d4e69c", "#a6d0f5", "#d9c4ec", "#cfcfcf"];

const LabelGlyph = styled.span`
  width: 15px;
  height: 15px;
  display: flex;
  align-items: center;
  justify-content: center;
  border: 1px solid #bcbcbc;
  background: #fff;
  font-size: 11px;
  color: #111;
`;

function App() {
  return (
    <Window>
      <GlobalStyle />
      <TitleBar>
        <Lights>
          <Light $c="#f5544d" />
          <Light $c="#fab42f" />
          <Light $c="#29c23f" />
        </Lights>
        <ToolButton>
          <PlayGlyph />
        </ToolButton>
        <ToolButton>
          <StopGlyph />
        </ToolButton>
        <Scheme>
          <Icon name="hammer" />
          <SchemeName>StoryboardCollab</SchemeName>
          <Chevron />
          <Icon name="phone" />
          <SchemeName>iPhone 7 Plus</SchemeName>
        </Scheme>
        <Status>
          StoryboardCollab:<StatusStrong>Ready</StatusStrong>
          <StatusDivider />
          Today at 11:50 PM
        </Status>
        <ToolGroup $left={584}>
          <ToolSegment>
            <Icon name="editorStd" />
          </ToolSegment>
          <ToolSegment>
            <Icon name="editorAssist" />
          </ToolSegment>
          <ToolSegment>
            <Icon name="editorVersion" />
          </ToolSegment>
        </ToolGroup>
        <ToolGroup $left={7}>
          <ToolSegment>
            <Icon name="paneLeft" />
          </ToolSegment>
          <ToolSegment>
            <Icon name="paneBottom" />
          </ToolSegment>
          <ToolSegment>
            <Icon name="paneRight" />
          </ToolSegment>
        </ToolGroup>
      </TitleBar>
      <Body>
        <Navigator>
          <NavTabs>
            {["navFolder", "navTree", "navSearch", "navWarn", "navTest", "navDebug", "navBreak", "navReport"].map((n) => (
              <NavTab key={n}>
                <Icon name={n} size={14} />
              </NavTab>
            ))}
          </NavTabs>
          <Tree>
            {files.map((f, i) => (
              <FileRow key={i} $level={f.level} $selected={"selected" in f}>
                <Disclosure $state={"state" in f ? f.state : undefined} />
                <RowIcon>
                  <Icon name={f.icon} size={15} />
                </RowIcon>
                <RowName>{f.name}</RowName>
                {"badge" in f && <Badge>{f.badge}</Badge>}
              </FileRow>
            ))}
          </Tree>
          <FilterBar>
            <Icon name="plus" size={11} />
            <FilterField $dim $ink="#a9aeae">
              <Icon name="filter" size={12} />
              <FilterText>Filter</FilterText>
              <Icon name="clock" size={12} />
              <Icon name="scmBox" size={12} />
            </FilterField>
          </FilterBar>
        </Navigator>
        <Editor>
          <JumpBar>
            <JumpNav>
              <Icon name="grid" size={14} />
            </JumpNav>
            <JumpNav>
              <Icon name="back" size={14} />
            </JumpNav>
            <JumpNav>
              <Icon name="forward" size={14} />
            </JumpNav>
            {crumbs.map((c, i) => (
              <React.Fragment key={i}>
                {i > 0 && <Chevron />}
                <Crumb>
                  <Icon name={c.icon} size={i === 0 ? 14 : 15} />
                  {c.text}
                </Crumb>
              </React.Fragment>
            ))}
          </JumpBar>
          <EditorBody>
            <Outline>
              <OutlineTree>
                <OutlineRow $level={0} $scene>
                  <Disclosure $state="open" />
                  <RowIcon>
                    <Icon name="scene" size={14} />
                  </RowIcon>
                  View Controller Scene
                </OutlineRow>
                {outline.map((r, i) => (
                  <OutlineRow key={i} $level={r.level} $selected={"selected" in r}>
                    <Disclosure $state={"state" in r ? r.state : undefined} />
                    <RowIcon>
                      {r.icon === "label" ? <LabelGlyph>L</LabelGlyph> : <Icon name={r.icon} size={15} />}
                    </RowIcon>
                    {r.name}
                  </OutlineRow>
                ))}
                <OutlineRule />
                <OutlineRow $level={0} $scene>
                  <Disclosure $state="closed" />
                  <RowIcon>
                    <Icon name="scene" size={14} />
                  </RowIcon>
                  Navigation Controller Scene
                </OutlineRow>
              </OutlineTree>
              <FilterBar>
                <FilterField>
                  <Icon name="filter" size={12} />
                  <FilterText>Filter</FilterText>
                </FilterField>
              </FilterBar>
            </Outline>
            <Canvas>
              <CanvasMain>
                <Stage>
                  <EntryArrow width="78" height="32" viewBox="0 0 78 32">
                    <defs>
                      <linearGradient id="entryFade" x1="0" x2="1" y1="0" y2="0">
                        <stop offset="0" stopColor="#9f9f9f" stopOpacity="0" />
                        <stop offset="0.6" stopColor="#9f9f9f" />
                      </linearGradient>
                    </defs>
                    <rect x="0" y="15" width="76" height="2.4" fill="url(#entryFade)" />
                    <path d="M61 3 76.5 16 61 29" fill="none" stroke="#a0a0a0" strokeWidth="1.7" />
                  </EntryArrow>
                  <Scene>
                    <SceneHeader>Navigation Controller</SceneHeader>
                    <NavBar>
                      <Battery />
                    </NavBar>
                    <SceneBody $placeholder>Navigation Controller</SceneBody>
                  </Scene>
                  <SegueArrow width="96" height="32" viewBox="0 0 96 32">
                    <path d="M0 16h36.5M59.5 16H93" stroke="#a0a0a0" strokeWidth="2" />
                    <circle cx="48" cy="16" r="11.5" fill="#fff" stroke="#a0a0a0" strokeWidth="1.3" />
                    <circle cx="44.5" cy="12" r="2" fill="none" stroke="#a0a0a0" />
                    <circle cx="51.5" cy="20" r="2" fill="none" stroke="#a0a0a0" />
                    <path d="M45.8 13.5 50.2 18.5" stroke="#a0a0a0" />
                    <path d="M79 3 93.5 16 79 29" fill="none" stroke="#a0a0a0" strokeWidth="1.7" />
                  </SegueArrow>
                  <Scene $selected>
                    <SceneHeader $selected>
                      <DockItem $selected>
                        <Icon name="vc" size={15} />
                      </DockItem>
                      <DockItem>
                        <Icon name="cube" size={13} />
                      </DockItem>
                      <DockItem>
                        <Icon name="exit" size={13} />
                      </DockItem>
                    </SceneHeader>
                    <NavBar>
                      <Battery />
                    </NavBar>
                    <SceneBody>Hello World!</SceneBody>
                  </Scene>
                </Stage>
                <VTrack>
                  <VThumb />
                </VTrack>
              </CanvasMain>
              <HTrack>
                <HThumb />
              </HTrack>
              <CanvasBar>
                <Icon name="sideToggle" size={14} />
                <ViewAs>
                  View as: iPhone 7 (<SizeClass>w</SizeClass>C <SizeClass>h</SizeClass>R)
                </ViewAs>
                <Zoom>
                  <Icon name="minus" size={12} />
                  90%
                  <Icon name="plus" size={13} />
                </Zoom>
                <BarIcons>
                  <Icon name="stackOff" size={15} />
                  <Icon name="embedOff" size={15} />
                  <Icon name="align" size={15} />
                  <Icon name="pin" size={15} />
                  <Icon name="resolve" size={15} />
                </BarIcons>
              </CanvasBar>
            </Canvas>
          </EditorBody>
        </Editor>
        <Inspector>
          <InspectorTabs>
            {["file", "help", "identity", "attrs", "ruler", "connect"].map((n) => (
              <InspectorTab key={n}>
                <Icon name={n} size={14} />
              </InspectorTab>
            ))}
          </InspectorTabs>
          <Panels>
            <Panel $h={72} $top={3}>
              <PanelTitle>Custom Class</PanelTitle>
              <FormRow $h={15} $gap={5}>
                <FormLabel>Class</FormLabel>
                <Field>
                  <FieldText>ViewController</FieldText>
                  <GoDot />
                  <Stepper>
                    <ArrowDown />
                  </Stepper>
                </Field>
              </FormRow>
              <FormRow $h={15}>
                <FormLabel>Module</FormLabel>
                <Field $disabled>
                  <FieldText>Current – StoryboardC...</FieldText>
                  <Stepper>
                    <ArrowDown />
                  </Stepper>
                </Field>
              </FormRow>
            </Panel>
            <Panel $h={94} $top={3}>
              <PanelTitle>Identity</PanelTitle>
              <FormRow $h={17}>
                <FormLabel>Storyboard ID</FormLabel>
                <Field />
              </FormRow>
              <Rule />
              <FormRow $h={16}>
                <FormLabel>Restoration ID</FormLabel>
                <Field />
              </FormRow>
              <CheckLine>
                <CheckBox />
                Use Storyboard ID
              </CheckLine>
            </Panel>
            <Panel $h={100} $top={3}>
              <PanelTitle>User Defined Runtime Attributes</PanelTitle>
              <AttrTable>
                <AttrHead>
                  <AttrCol>Key Path</AttrCol>
                  <AttrCol>Type</AttrCol>
                  <AttrCol>Value</AttrCol>
                </AttrHead>
              </AttrTable>
              <AttrActions>
                <Icon name="plus" size={10} />
                <Icon name="minus" size={10} />
              </AttrActions>
            </Panel>
            <Panel $h={185} $top={3}>
              <PanelTitle>Document</PanelTitle>
              <FormRow $h={17}>
                <FormLabel>Label</FormLabel>
                <Field $disabled>
                  <FieldText>Xcode Specific Label</FieldText>
                </Field>
              </FormRow>
              <Swatches>
                ×
                {swatchColors.map((c) => (
                  <Swatch key={c} $c={c} />
                ))}
              </Swatches>
              <FormRow $h={14} $gap={4}>
                <FormLabel>Object ID</FormLabel>
                <PlainValue>BYZ-38-t0r</PlainValue>
              </FormRow>
              <FormRow $h={16} $gap={5}>
                <FormLabel>Lock</FormLabel>
              </FormRow>
              <FormRow $h={14}>
                <FormLabel>Notes</FormLabel>
              </FormRow>
              <LockUnder />
              <NotesUnder />
              <Menu>
                <MenuItem>
                  <Check>✓</Check>Inherited - (Nothing)
                </MenuItem>
                <MenuRule />
                <MenuItem>Nothing</MenuItem>
                <MenuItem $active>All Properties</MenuItem>
                <MenuItem>Localizable Properties</MenuItem>
                <MenuItem>Non-localizable Properties</MenuItem>
              </Menu>
            </Panel>
          </Panels>
          <LibraryTabs>
            {["file", "braces", "target", "film"].map((n) => (
              <InspectorTab key={n}>
                <Icon name={n} size={14} />
              </InspectorTab>
            ))}
          </LibraryTabs>
          <LibraryList>
            <LibraryItem>
              <LibraryName>Label</LibraryName>
              <LibraryText>
                <LibraryLine>
                  <b>Label</b> - A variably sized amount of
                </LibraryLine>
                <LibraryLine>static text.</LibraryLine>
              </LibraryText>
            </LibraryItem>
          </LibraryList>
          <InspectorFilter>
            <Icon name="grid" size={13} />
            <FilterField $ink="#444">
              <Icon name="filterBlue" size={13} />
              <FilterText>Label</FilterText>
              <ClearDot />
            </FilterField>
          </InspectorFilter>
        </Inspector>
      </Body>
    </Window>
  );
}

export default App;
